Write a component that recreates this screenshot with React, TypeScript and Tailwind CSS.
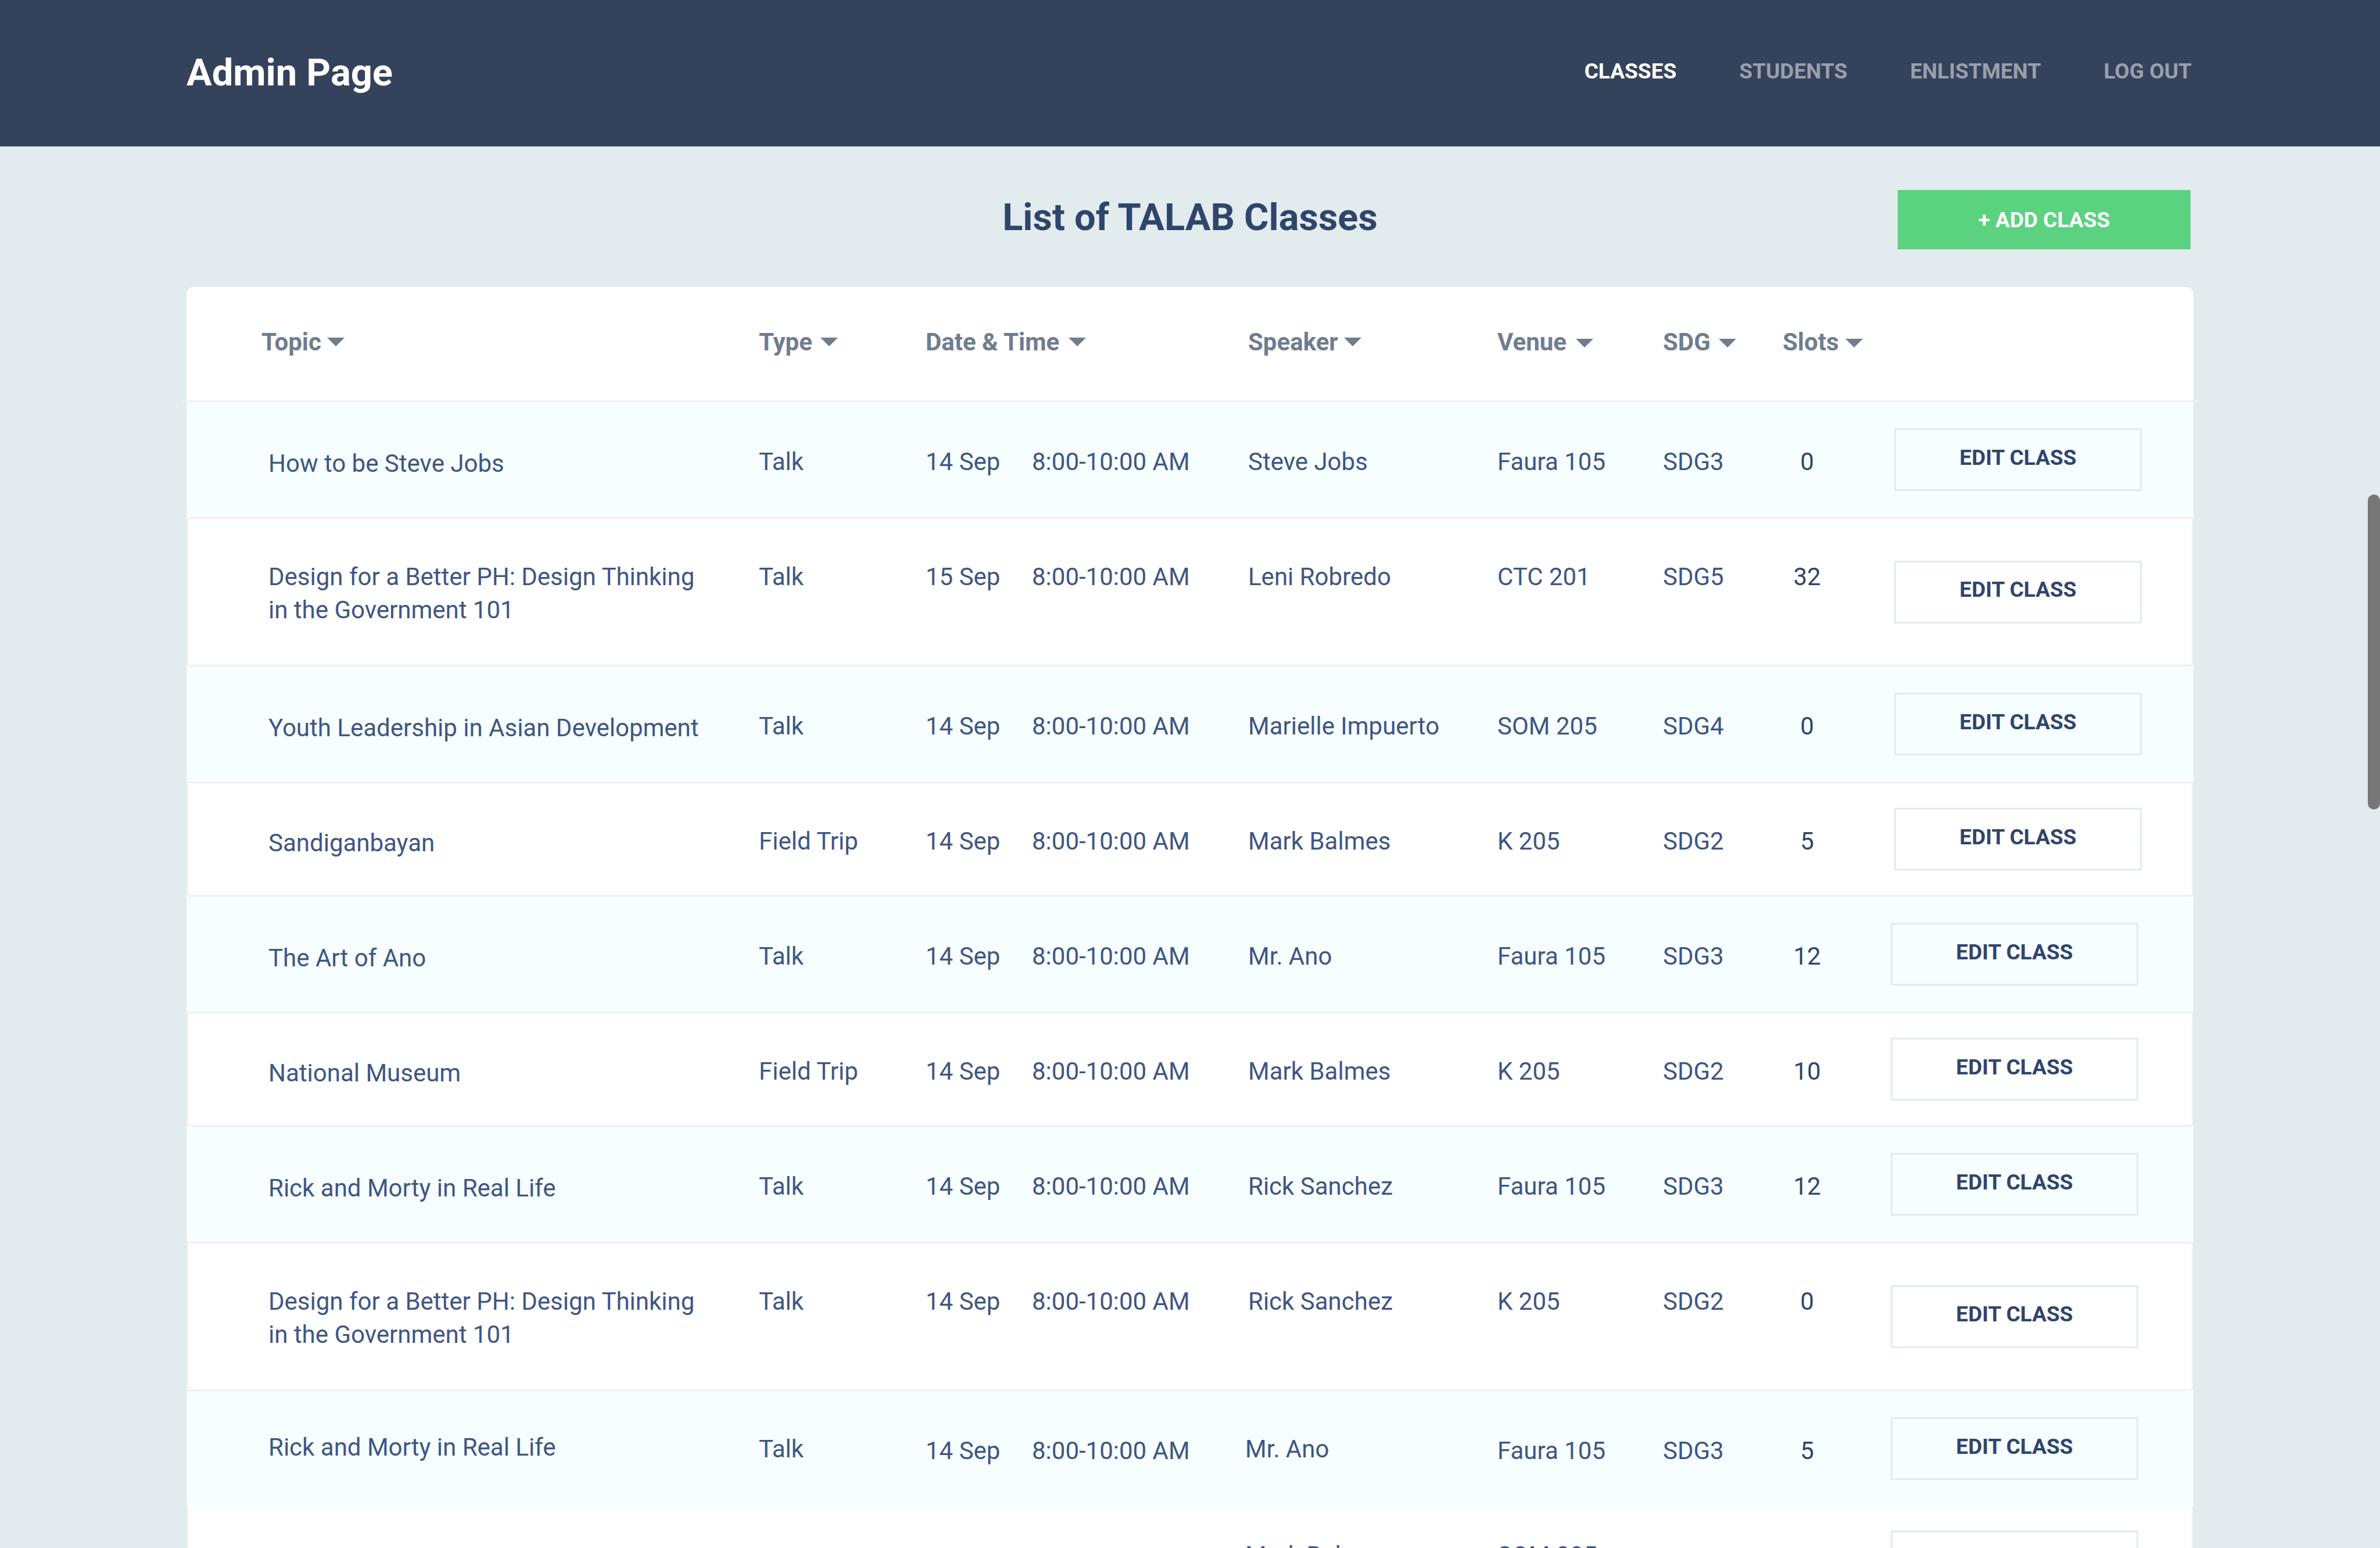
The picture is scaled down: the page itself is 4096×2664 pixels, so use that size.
type ClassRow = {
  topic: string;
  type: string;
  date: string;
  time: string;
  speaker: string;
  venue: string;
  sdg: string;
  slots: number;
};

type RowStyle = {
  row: string;
  border: string;
  topic: string;
  type: string;
  date: string;
  speaker: string;
  venue: string;
  sdg: string;
};

const TIME = "8:00-10:00 AM";

const classes: ClassRow[] = [
  { topic: "How to be Steve Jobs", type: "Talk", date: "14 Sep", time: TIME, speaker: "Steve Jobs", venue: "Faura 105", sdg: "SDG3", slots: 0 },
  { topic: "Design for a Better PH: Design Thinking in the Government 101", type: "Talk", date: "15 Sep", time: TIME, speaker: "Leni Robredo", venue: "CTC 201", sdg: "SDG5", slots: 32 },
  { topic: "Youth Leadership in Asian Development", type: "Talk", date: "14 Sep", time: TIME, speaker: "Marielle Impuerto", venue: "SOM 205", sdg: "SDG4", slots: 0 },
  { topic: "Sandiganbayan", type: "Field Trip", date: "14 Sep", time: TIME, speaker: "Mark Balmes", venue: "K 205", sdg: "SDG2", slots: 5 },
  { topic: "The Art of Ano", type: "Talk", date: "14 Sep", time: TIME, speaker: "Mr. Ano", venue: "Faura 105", sdg: "SDG3", slots: 12 },
  { topic: "National Museum", type: "Field Trip", date: "14 Sep", time: TIME, speaker: "Mark Balmes", venue: "K 205", sdg: "SDG2", slots: 10 },
  { topic: "Rick and Morty in Real Life", type: "Talk", date: "14 Sep", time: TIME, speaker: "Rick Sanchez", venue: "Faura 105", sdg: "SDG3", slots: 12 },
  { topic: "Design for a Better PH: Design Thinking in the Government 101", type: "Talk", date: "14 Sep", time: TIME, speaker: "Rick Sanchez", venue: "K 205", sdg: "SDG2", slots: 0 },
  { topic: "Rick and Morty in Real Life", type: "Talk", date: "14 Sep", time: TIME, speaker: "Mr. Ano", venue: "Faura 105", sdg: "SDG3", slots: 5 },
  { topic: "National Museum", type: "Field Trip", date: "14 Sep", time: TIME, speaker: "Mark Balmes", venue: "SOM 205", sdg: "SDG4", slots: 12 },
];

const tinted: RowStyle = {
  row: "h-[201px] bg-[#f6feff]",
  border: "border-x-transparent border-t-[#f0f0f0] border-t-[3px]",
  topic: "pt-[77px]",
  type: "pt-[74px]",
  date: "pt-[74px]",
  speaker: "pt-[74px] pl-[5px]",
  venue: "pt-[74px]",
  sdg: "pt-[74px]",
};

const plain: RowStyle = {
  row: "h-[195px] bg-white",
  border: "border-[#f0f0f0] border-t-[3px]",
  topic: "pt-[74px]",
  type: "pt-[71px]",
  date: "pt-[71px]",
  speaker: "pt-[71px] pl-[5px]",
  venue: "pt-[71px]",
  sdg: "pt-[71px]",
};

const tall: RowStyle = { ...plain, row: "h-[254px] bg-white", topic: "pt-[71px]" };

const tintedLast: RowStyle = {
  ...tinted,
  topic: "pt-[68px]",
  type: "pt-[71px]",
  speaker: "pt-[71px]",
};

const trailing: RowStyle = {
  ...plain,
  row: "h-[192px] bg-white",
  border: "border-[#f0f0f0]",
  speaker: "pt-[56px]",
  venue: "pt-[56px]",
  sdg: "pt-[59px]",
};

const rowStyles = [tinted, tall, tinted, plain, tinted, plain, tinted, tall, tintedLast, trailing];

const columns = [
  { label: "Topic", cell: "pl-[129px]", gap: "gap-2.5", arrow: "", span: 1 },
  { label: "Type", cell: "", gap: "gap-3.5", arrow: "", span: 1 },
  { label: "Date & Time", cell: "", gap: "gap-4", arrow: "", span: 2 },
  { label: "Speaker", cell: "pl-[5px]", gap: "gap-2.5", arrow: "", span: 1 },
  { label: "Venue", cell: "", gap: "gap-4", arrow: "pt-1", span: 1 },
  { label: "SDG", cell: "", gap: "gap-3.5", arrow: "pt-1", span: 1 },
  { label: "Slots", cell: "", gap: "gap-3", arrow: "pt-1", span: 1 },
];

const navItems = ["Classes", "Students", "Enlistment", "Log out"];

function SortArrow() {
  return (
    <svg viewBox="0 0 30 15" className="h-[15px] w-[30px]" fill="currentColor" aria-hidden="true">
      <path d="M0 0h30L15 15z" />
    </svg>
  );
}

function Header() {
  return (
    <header className="flex h-[252px] items-center justify-between bg-[#35425b] pr-[324px] pl-[321px]">
      <span className="text-[65px] font-bold text-white">Admin Page</span>
      <nav className="flex gap-[108px] pb-1.5 text-[37px] font-bold uppercase">
        {navItems.map((item, i) => (
          <a key={item} href="#" className={i === 0 ? "text-white" : "text-[#999fac]"}>
            {item}
          </a>
        ))}
      </nav>
    </header>
  );
}

function ClassTableRow({ item, style, buttonPad }: { item: ClassRow; style: RowStyle; buttonPad: string }) {
  const cell = `${style.border} align-top`;
  return (
    <tr className={style.row}>
      <td className={`${cell} border-l-[3px] whitespace-normal`}>
        <div className={`${style.topic} pr-[80px] pl-[138px]`}>{item.topic}</div>
      </td>
      <td className={cell}><div className={style.type}>{item.type}</div></td>
      <td className={cell}><div className={style.date}>{item.date}</div></td>
      <td className={cell}><div className={style.date}>{item.time}</div></td>
      <td className={cell}><div className={style.speaker}>{item.speaker}</div></td>
      <td className={cell}><div className={style.venue}>{item.venue}</div></td>
      <td className={cell}><div className={style.sdg}>{item.sdg}</div></td>
      <td className={cell}>
        <div className={`${style.sdg} w-[84px] text-center text-[#30456b]`}>{item.slots}</div>
      </td>
      <td className={`${style.border} border-r-[3px] align-middle`}>
        <div className={`${buttonPad} flex`}>
          <button
            type="button"
            className="h-[108px] w-[426px] border-[3px] border-[#e2ebed] pb-2 text-[37px] leading-none font-bold text-[#30456b]"
          >
            EDIT CLASS
          </button>
        </div>
      </td>
    </tr>
  );
}

export default function App() {
  return (
    <div className="relative h-screen overflow-hidden bg-[#e2ebed] font-['Roboto',sans-serif]">
      <Header />
      <main className="px-[321px] pt-[75px]">
        <div className="mb-[65px] grid grid-cols-[1fr_auto_1fr] items-center">
          <h1 className="col-start-2 pb-2 text-[65px] leading-none font-bold text-[#30456b]">List of TALAB Classes</h1>
          <button
            type="button"
            className="mr-[5px] h-[102px] w-[504px] justify-self-end bg-[#5bd27f] text-[37px] leading-none font-bold text-white"
          >
            + ADD CLASS
          </button>
        </div>
        <section className="relative rounded-t-[12px] bg-white">
          <table className="w-full table-fixed border-separate border-spacing-0 text-left text-[42px] leading-[57px] whitespace-nowrap text-[#3f5683]">
            <colgroup>
              <col />
              <col className="w-[287px]" />
              <col className="w-[183px]" />
              <col className="w-[367px]" />
              <col className="w-[434px]" />
              <col className="w-[285px]" />
              <col className="w-[206px]" />
              <col className="w-[180px]" />
              <col className="w-[527px]" />
            </colgroup>
            <thead>
              <tr className="h-[195px] text-[#707d8f]">
                {columns.map((c) => (
                  <th key={c.label} scope="col" colSpan={c.span} className={`${c.cell} pt-[66px] align-top font-bold`}>
                    <button type="button" className={`${c.gap} flex items-center`}>
                      {c.label}
                      <span className={c.arrow}>
                        <SortArrow />
                      </span>
                    </button>
                  </th>
                ))}
                <td />
              </tr>
            </thead>
            <tbody>
              {classes.map((item, i) => (
                <ClassTableRow key={i} item={item} style={rowStyles[i]} buttonPad={i < 4 ? "pl-[12px]" : "pl-[6px]"} />
              ))}
            </tbody>
          </table>
          <div className="absolute top-[195px] -right-[9px] -left-[9px] h-[3px] bg-[#f0f0f0]" aria-hidden="true" />
        </section>
      </main>
      <div className="absolute top-[851px] right-0 h-[542px] w-[21px] rounded-full bg-[#777777]" aria-hidden="true" />
    </div>
  );
}
